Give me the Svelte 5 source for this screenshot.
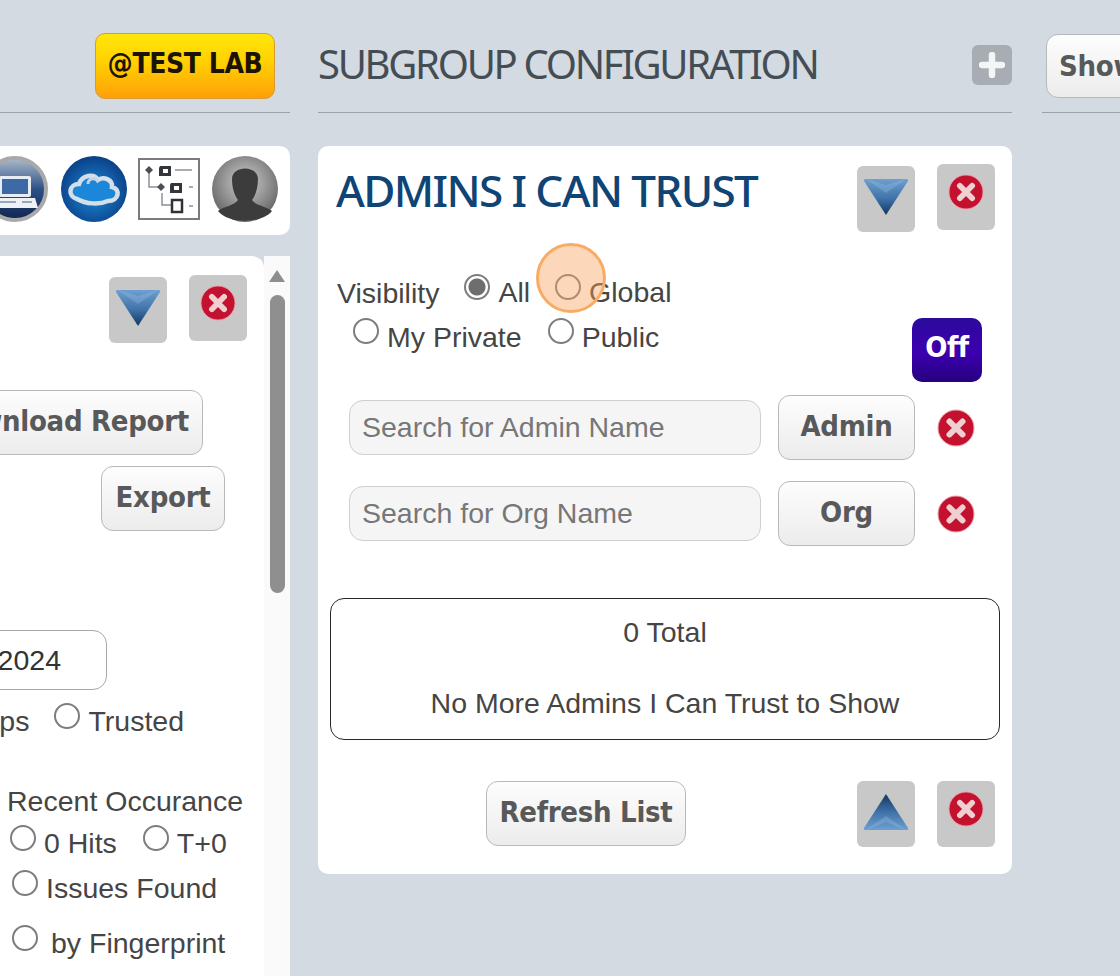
<script>
	// shared id prefix not needed: gradients are declared once in the hidden defs svg
</script>

{#snippet closeIcon(size)}
	<svg class="x-icon" width={size} height={size} viewBox="0 0 38 38" aria-hidden="true">
		<circle cx="19" cy="19" r="18" fill="#c3122f" stroke="#f0a0aa" stroke-width="1" />
		<path d="M12.5 12.5 L25.5 25.5 M25.5 12.5 L12.5 25.5" stroke="#f0cfd0" stroke-width="6" stroke-linecap="round" />
	</svg>
{/snippet}

{#snippet arrowBtn(up)}
	<button class="icon-btn arrow" class:arrow-up={up} aria-label={up ? 'Collapse' : 'Expand'}>
		<svg width="48" height="44" viewBox="0 0 48 44" aria-hidden="true">
			{#if up}
				<path d="M24 2 L46 36 Q47 38 44 38 L4 38 Q1 38 2 36 Z" fill="url(#triUp)" />
				<path d="M24 2 L24 24 L44 38 L24 30 L4 38 L24 24" fill="#9cc4ea" opacity="0.3" />
			{:else}
				<path d="M24 42 L46 8 Q47 6 44 6 L4 6 Q1 6 2 8 Z" fill="url(#triDown)" />
				<path d="M24 42 L24 20 L44 6 L24 12 L4 6 L24 20" fill="#9cc4ea" opacity="0.3" />
			{/if}
		</svg>
	</button>
{/snippet}

{#snippet closeBtn()}
	<button class="icon-btn" aria-label="Close">{@render closeIcon(36)}</button>
{/snippet}

<svg class="defs" width="0" height="0" aria-hidden="true">
	<defs>
		<linearGradient id="triDown" x1="0" y1="0" x2="0" y2="1">
			<stop offset="0" stop-color="#6f9fd0" />
			<stop offset="0.55" stop-color="#3f72a8" />
			<stop offset="1" stop-color="#12365f" />
		</linearGradient>
		<linearGradient id="triUp" x1="0" y1="0" x2="0" y2="1">
			<stop offset="0" stop-color="#12365f" />
			<stop offset="0.5" stop-color="#3f72a8" />
			<stop offset="1" stop-color="#6f9fd0" />
		</linearGradient>
		<radialGradient id="avatarBg" cx="0.5" cy="0.4" r="0.65">
			<stop offset="0" stop-color="#d0d0d0" />
			<stop offset="1" stop-color="#5c5c5c" />
		</radialGradient>
		<linearGradient id="laptopBg" x1="0" y1="0" x2="0" y2="1">
			<stop offset="0" stop-color="#aebccc" />
			<stop offset="0.5" stop-color="#2f5186" />
			<stop offset="1" stop-color="#10244f" />
		</linearGradient>
		<radialGradient id="cloudBg" cx="0.5" cy="0.55" r="0.55">
			<stop offset="0" stop-color="#1f8ede" />
			<stop offset="1" stop-color="#0a3f86" />
		</radialGradient>
	</defs>
</svg>

<div class="page">
	<section class="col col-left">
		<header class="head head-left">
			<button class="lab">@TEST LAB</button>
		</header>

		<div class="icon-card">
			<svg class="laptop" width="66" height="66" viewBox="0 0 66 66" aria-hidden="true">
				<circle cx="33" cy="33" r="31" fill="url(#laptopBg)" stroke="#a9a9a9" stroke-width="4" />
				<rect x="17" y="20" width="32" height="21" rx="2" fill="#e8edf3" />
				<rect x="20" y="23" width="26" height="15" fill="#3d6aa5" />
				<path d="M13 42 H53 L56 52 H10 Z" fill="#eef1f5" />
				<path d="M17 46 H34 M40 46 H50" stroke="#9aa6b6" stroke-width="2" />
			</svg>
			<svg width="66" height="66" viewBox="0 0 66 66" aria-hidden="true">
				<circle cx="33" cy="33" r="33" fill="url(#cloudBg)" />
				<path d="M16 43 C6 40 8 28 18 28 C21 19 33 17 37 24 C43 20 52 24 51 31 C60 33 58 45 47 45 C38 49 25 48 16 43 Z" fill="#1c86d8" stroke="#d3dfe9" stroke-width="4.5" />
				<path d="M27 28 C27 22 35 21 37 26" fill="none" stroke="#c4d3e0" stroke-width="3" />
			</svg>
			<svg class="tree" width="62" height="62" viewBox="0 0 62 62" aria-hidden="true">
				<rect x="1" y="1" width="60" height="60" fill="#fff" stroke="#7b7b7b" stroke-width="2" />
				<path d="M11 13 V29 H22 M24 29 M24 35 V47 H34" fill="none" stroke="#8d9096" stroke-width="1.5" />
				<path d="M7 12 L11 8 L15 12 L11 16 Z M19 29 L23 25 L27 29 L23 33 Z" fill="#4b4f55" />
				<path d="M22 8 H33 V18 H21 V10 Z M33 25 H44 V35 H32 V27 Z" fill="#33373c" />
				<rect x="25" y="11" width="5" height="4" fill="#fff" />
				<rect x="36" y="28" width="5" height="4" fill="#fff" />
				<rect x="34" y="42" width="10" height="12" fill="#fff" stroke="#2f3338" stroke-width="2.5" />
				<path d="M37 12 H54" stroke="#8d9096" stroke-width="1.5" />
				<path d="M51 29 H55 M51 48 H55" stroke="#8d9096" stroke-width="1.5" />
			</svg>
			<svg width="66" height="66" viewBox="0 0 66 66" aria-hidden="true">
				<circle cx="33" cy="33" r="33" fill="url(#avatarBg)" />
				<path d="M20 23 C20 9 46 9 46 23 C46 33 43 40 40 44 C44 50 54 50 60 55 C50 68 16 68 6 55 C12 50 22 50 26 44 C23 40 20 33 20 23 Z" fill="#3c3c3c" />
			</svg>
		</div>

		<div class="list-wrap">
			<div class="list">
				<div class="row row-controls">
					{@render arrowBtn(false)}
					{@render closeBtn()}
				</div>
				<div class="row row-download"><button class="btn btn-download">Download Report</button></div>
				<div class="row row-export"><button class="btn btn-export">Export</button></div>
				<div class="row row-date"><input class="date" value="01/01/2024" aria-label="Date" /></div>
				<div class="row row-trusted">
					<span class="plain">Groups</span>
					<label class="opt"><input type="radio" name="scope" /><span>Trusted</span></label>
				</div>
				<div class="recent">Recent Occurance</div>
				<div class="row-left row-hits">
					<label class="opt"><input type="radio" name="recent" /><span>0 Hits</span></label>
					<label class="opt"><input type="radio" name="recent" /><span>T+0</span></label>
				</div>
				<div class="row-left row-issues">
					<label class="opt"><input type="radio" name="recent" /><span>Issues Found</span></label>
				</div>
				<div class="row-left row-print">
					<label class="opt opt-wide"><input type="radio" name="recent" /><span>by Fingerprint</span></label>
				</div>
			</div>
			<div class="scrollbar">
				<span class="scroll-up"></span>
				<span class="scroll-thumb"></span>
			</div>
		</div>
	</section>

	<section class="col col-mid">
		<header class="head head-mid">
			<h2>SUBGROUP CONFIGURATION</h2>
			<button class="plus" aria-label="Add subgroup">
				<svg width="26" height="26" viewBox="0 0 26 26" aria-hidden="true">
					<path d="M13 3 V23 M3 13 H23" stroke="#f4f5f6" stroke-width="6.5" stroke-linecap="round" />
				</svg>
			</button>
		</header>

		<div class="card">
			<div class="card-top">
				<h1>ADMINS I CAN TRUST</h1>
				{@render arrowBtn(false)}
				{@render closeBtn()}
			</div>

			<div class="vis-one">
				<span class="vis-label">Visibility</span>
				<label class="opt"><input type="radio" name="vis" checked /><span>All</span></label>
				<label class="opt"><input type="radio" name="vis" /><span>Global</span></label>
			</div>
			<div class="vis-two">
				<label class="opt"><input type="radio" name="vis" /><span>My Private</span></label>
				<label class="opt"><input type="radio" name="vis" /><span>Public</span></label>
				<button class="off">Off</button>
			</div>

			<div class="search search-first">
				<input placeholder="Search for Admin Name" />
				<button class="btn btn-search">Admin</button>
				<span class="clear">{@render closeIcon(38)}</span>
			</div>
			<div class="search">
				<input placeholder="Search for Org Name" />
				<button class="btn btn-search">Org</button>
				<span class="clear">{@render closeIcon(38)}</span>
			</div>

			<div class="results">
				<div>0 Total</div>
				<div>&nbsp;</div>
				<div>No More Admins I Can Trust to Show</div>
			</div>

			<div class="card-foot">
				<button class="btn btn-refresh">Refresh List</button>
				{@render arrowBtn(true)}
				{@render closeBtn()}
			</div>

			<span class="click-ring"></span>
		</div>
	</section>

	<section class="col col-right">
		<header class="head head-right">
			<button class="btn btn-show">Show All</button>
		</header>
	</section>
</div>

<style>
	:global(body) {
		background: #d3dae2;
	}

	.defs {
		position: absolute;
	}

	.page {
		display: flex;
		height: 976px;
		overflow: hidden;
		background: #d3dae2;
		color: #454545;
		font-family: 'Liberation Sans', Arial, sans-serif;
		font-size: 28.5px;
	}

	.col {
		flex: none;
		display: flex;
		flex-direction: column;
		min-width: 0;
	}

	.col-left {
		width: 290px;
	}

	.col-mid {
		width: 694px;
		margin-left: 28px;
	}

	.col-right {
		width: 78px;
		margin-left: 30px;
		overflow: hidden;
	}

	.head {
		flex: none;
		display: flex;
		align-items: center;
		height: 98px;
		border-bottom: 1px solid #9aa3aa;
		padding-bottom: 14px;
	}

	.head-left {
		justify-content: flex-end;
		padding-right: 15px;
	}

	.head-mid {
		justify-content: space-between;
	}

	.lab {
		width: 180px;
		height: 66px;
		margin-top: 33px;
		border: 1px solid #d99a35;
		border-radius: 10px;
		background: linear-gradient(#ffe60a, #ffd000 45%, #ff9f0a);
		color: #1d1206;
		font: 700 28px 'DejaVu Sans', sans-serif;
		font-stretch: condensed;
		letter-spacing: -0.4px;
		padding: 0 0 4px;
	}

	.head-mid h2 {
		margin: 29px 0 0;
		font: 400 40px 'Noto Sans', sans-serif;
		letter-spacing: -2.3px;
		color: #454d54;
	}

	.plus {
		width: 40px;
		height: 40px;
		margin-top: 31px;
		padding: 0;
		border: 0;
		border-radius: 6px;
		background: #a8adb3;
		display: grid;
		place-items: center;
	}

	.head-right {
		justify-content: flex-start;
	}

	.btn {
		height: 65px;
		padding: 0 0 4px;
		box-sizing: border-box;
		border: 1px solid #b9b9b9;
		border-radius: 12px;
		background: linear-gradient(#fdfdfd, #ececec);
		color: #595959;
		font: 700 29px 'DejaVu Sans', sans-serif;
		font-stretch: condensed;
		letter-spacing: -0.3px;
		white-space: nowrap;
	}

	.btn-show {
		flex: none;
		width: 170px;
		height: 64px;
		margin: 33px 0 0 4px;
		padding: 0 0 0 12px;
		text-align: left;
	}

	.icon-card {
		flex: none;
		display: flex;
		align-items: flex-start;
		justify-content: flex-end;
		gap: 12px;
		box-sizing: border-box;
		height: 89px;
		margin-top: 33px;
		padding: 10px 12px 0 0;
		background: #fff;
		border-radius: 0 10px 10px 0;
		overflow: hidden;
	}

	.icon-card svg {
		flex: none;
	}

	.icon-card .tree {
		margin: 2px 0 0 -1px;
	}

	.icon-card .laptop {
		margin-right: 1px;
	}

	.list-wrap {
		flex: 1;
		display: flex;
		margin-top: 21px;
		min-height: 0;
	}

	.list {
		width: 264px;
		background: #fff;
		border-top-right-radius: 12px;
		overflow: hidden;
	}

	.scrollbar {
		width: 26px;
		background: #fafafa;
		display: flex;
		flex-direction: column;
		align-items: center;
	}

	.scroll-up {
		width: 0;
		height: 0;
		margin-top: 14px;
		border-left: 8px solid transparent;
		border-right: 8px solid transparent;
		border-bottom: 12px solid #8e8e8e;
	}

	.scroll-thumb {
		width: 15px;
		height: 298px;
		margin-top: 13px;
		border-radius: 8px;
		background: #8f8f8f;
	}

	.row {
		display: flex;
		justify-content: flex-end;
	}

	.row > * {
		flex: none;
	}

	.row-controls {
		align-items: flex-start;
		gap: 22px;
		padding: 19px 17px 0 0;
	}

	.icon-btn {
		flex: none;
		width: 58px;
		height: 66px;
		margin: 0;
		padding: 0;
		border: 0;
		border-radius: 6px;
		background: #c8c8c8;
		display: grid;
		place-items: center;
	}

	.icon-btn .x-icon {
		margin-bottom: 10px;
	}

	.arrow {
		margin-top: 2px;
	}

	.arrow svg {
		margin-bottom: 8px;
	}

	.arrow-up svg {
		margin-bottom: 0;
	}

	.row-download {
		margin-top: 47px;
		padding-right: 61px;
	}

	.btn-download {
		padding: 0 13px 4px;
	}

	.row-export {
		margin-top: 11px;
		padding-right: 39px;
	}

	.btn-export {
		width: 124px;
	}

	.row-date {
		margin-top: 99px;
		padding-right: 157px;
	}

	.date {
		width: 200px;
		height: 60px;
		box-sizing: border-box;
		padding: 0 45px 0 0;
		border: 1px solid #a8a8a8;
		border-radius: 14px;
		background: #fff;
		color: #333;
		font: 28.5px 'Liberation Sans', sans-serif;
		text-align: right;
	}

	.row-trusted {
		margin-top: 13px;
		padding-right: 80px;
		gap: 25px;
	}

	.plain {
		margin-top: 2px;
		line-height: 32px;
	}

	.opt {
		display: inline-flex;
		align-items: flex-start;
		gap: 8px;
		white-space: nowrap;
	}

	.opt span {
		margin-top: 2px;
		line-height: 32px;
	}

	.opt-wide {
		gap: 13px;
	}

	input[type='radio'] {
		appearance: none;
		flex: none;
		width: 26px;
		height: 26px;
		margin: 0;
		box-sizing: border-box;
		border: 2px solid #7d7d7d;
		border-radius: 50%;
		background: #fff;
	}

	input[type='radio']:checked {
		background: radial-gradient(circle, #6e6e6e 0 8px, #fff 9px);
	}

	.recent {
		margin-top: 48px;
		padding-left: 7px;
		line-height: 32px;
		white-space: nowrap;
	}

	.row-left {
		display: flex;
	}

	.row-hits {
		margin-top: 8px;
		padding-left: 10px;
		gap: 26px;
	}

	.row-issues {
		margin-top: 11px;
		padding-left: 12px;
	}

	.row-print {
		margin-top: 21px;
		padding-left: 12px;
	}

	.card {
		position: relative;
		flex: none;
		margin-top: 33px;
		padding-bottom: 27px;
		background: #fff;
		border-radius: 10px;
	}

	.card-top {
		display: flex;
		align-items: flex-start;
		gap: 22px;
		padding: 18px 17px 0 18px;
	}

	.card-top h1 {
		flex: 1;
		margin: -2px 0 0;
		font: 500 44px/56px 'Noto Sans', sans-serif;
		letter-spacing: -1.6px;
		color: #0f4474;
		white-space: nowrap;
	}

	.vis-one {
		display: flex;
		align-items: flex-start;
		gap: 25px;
		margin-top: 42px;
		padding-left: 19px;
	}

	.vis-label {
		margin-top: 3px;
		line-height: 32px;
	}

	.vis-two {
		display: flex;
		align-items: flex-start;
		gap: 26px;
		margin-top: 9px;
		padding: 0 30px 0 35px;
	}

	.vis-two .opt span {
		margin-top: 3px;
	}

	.off {
		width: 70px;
		height: 64px;
		margin-left: auto;
		padding: 0 0 6px;
		border: 0;
		border-radius: 10px;
		background: linear-gradient(#2b0a9c, #3c00b0 55%, #26007e);
		color: #fff;
		font: 700 29px 'DejaVu Sans', sans-serif;
		font-stretch: condensed;
		letter-spacing: -0.5px;
	}

	.search {
		display: flex;
		align-items: flex-start;
		gap: 17px;
		margin-top: 21px;
		padding-left: 31px;
	}

	.search-first {
		margin-top: 13px;
	}

	.search input {
		width: 412px;
		height: 55px;
		margin-top: 5px;
		box-sizing: border-box;
		padding: 0 12px;
		border: 1px solid #cfcfcf;
		border-radius: 14px;
		background: #f5f5f5;
		font: 28.5px 'Liberation Sans', sans-serif;
		color: #333;
	}

	.search input::placeholder {
		color: #777;
		opacity: 1;
	}

	.btn-search {
		width: 137px;
	}

	.clear {
		display: block;
		height: 38px;
		margin: 14px 0 0 5px;
	}

	.results {
		box-sizing: border-box;
		height: 142px;
		margin: 52px 12px 0 12px;
		padding-top: 16px;
		border: 1px solid #2a2a2a;
		border-radius: 14px;
		line-height: 35.5px;
		text-align: center;
	}

	.card-foot {
		display: flex;
		align-items: flex-start;
		gap: 22px;
		margin-top: 41px;
		padding: 0 17px 0 168px;
	}

	.btn-refresh {
		width: 200px;
		margin-right: auto;
	}

	.card-foot .arrow {
		margin-top: 0;
	}

	.click-ring {
		position: absolute;
		left: 218px;
		top: 97px;
		width: 70px;
		height: 70px;
		box-sizing: border-box;
		border: 3px solid #f7ab65;
		border-radius: 50%;
		background: rgba(248, 160, 90, 0.42);
		pointer-events: none;
	}
</style>
